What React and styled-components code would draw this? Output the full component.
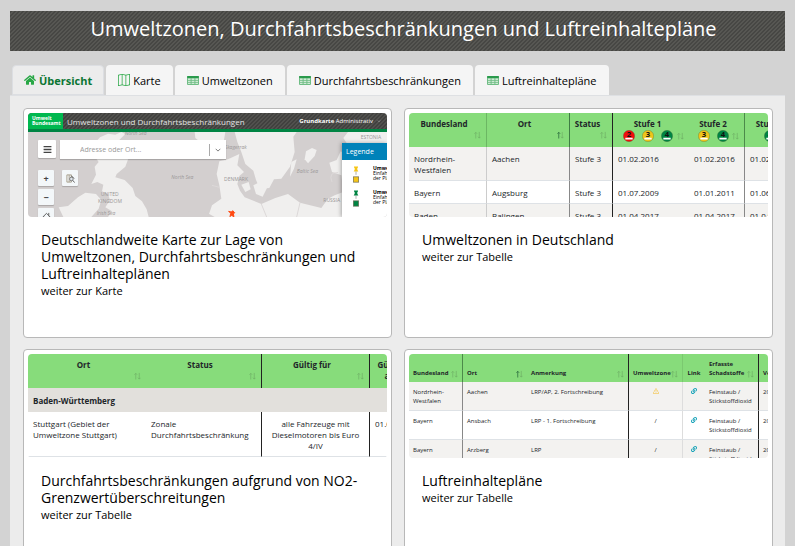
import { useState } from "react";
import styled, { createGlobalStyle } from "styled-components";
import { FaHome, FaBars, FaLink } from "react-icons/fa";
import { BsExclamationTriangle, BsMap, BsChevronDown } from "react-icons/bs";

const tabs = [
  { id: "uebersicht", label: "Übersicht", icon: <FaHome /> },
  { id: "karte", label: "Karte", icon: <BsMap /> },
  { id: "umweltzonen", label: "Umweltzonen", icon: <TableIcon /> },
  { id: "beschraenkungen", label: "Durchfahrtsbeschränkungen", icon: <TableIcon /> },
  { id: "plaene", label: "Luftreinhaltepläne", icon: <TableIcon /> },
];

const zones = [
  ["Nordrhein-Westfalen", "Aachen", "Stufe 3", "01.02.2016", "01.02.2016", "01.02.2016"],
  ["Bayern", "Augsburg", "Stufe 3", "01.07.2009", "01.01.2011", "01.06.2016"],
  ["Baden-Württemberg", "Balingen", "Stufe 3", "01.04.2017", "01.04.2017", "01.04.2017"],
];

const plans = [
  ["Nordrhein-Westfalen", "Aachen", "LRP/AP, 2. Fortschreibung", true],
  ["Bayern", "Ansbach", "LRP - 1. Fortschreibung", false],
  ["Bayern", "Arzberg", "LRP", false],
];

export default function App() {
  const [active, setActive] = useState("uebersicht");

  return (
    <Page>
      <GlobalStyle />
      <Header>
        <PageTitle>Umweltzonen, Durchfahrtsbeschränkungen und Luftreinhaltepläne</PageTitle>
      </Header>
      <TabList role="tablist">
        {tabs.map((tab) => (
          <Tab
            key={tab.id}
            role="tab"
            aria-selected={active === tab.id}
            $active={active === tab.id}
            onClick={() => setActive(tab.id)}
          >
            {tab.icon}
            {tab.label}
          </Tab>
        ))}
      </TabList>
      <Panel role="tabpanel">
        <Card>
          <MapPreview />
          <CardTitle>
            Deutschlandweite Karte zur Lage von Umweltzonen, Durchfahrtsbeschränkungen und Luftreinhalteplänen
          </CardTitle>
          <CardLink href="#karte">weiter zur Karte</CardLink>
        </Card>
        <Card>
          <ZonesPreview />
          <CardTitle>Umweltzonen in Deutschland</CardTitle>
          <CardLink href="#umweltzonen">weiter zur Tabelle</CardLink>
        </Card>
        <Card>
          <RestrictionsPreview />
          <CardTitle>Durchfahrtsbeschränkungen aufgrund von NO2-Grenzwertüberschreitungen</CardTitle>
          <CardLink href="#beschraenkungen">weiter zur Tabelle</CardLink>
        </Card>
        <Card>
          <PlansPreview />
          <CardTitle>Luftreinhaltepläne</CardTitle>
          <CardLink href="#plaene">weiter zur Tabelle</CardLink>
        </Card>
      </Panel>
    </Page>
  );
}

function TableIcon() {
  return (
    <svg viewBox="0 0 12 12" aria-hidden="true">
      <rect x="0" y="2" width="12" height="9" rx="1" fill="#6fbd85" />
      <rect x="0" y="2" width="12" height="2" rx="1" fill="#2a9a4c" />
      <path
        d="M1 4.5h2.6v1.4H1zM4.6 4.5h2.8v1.4H4.6zM8.4 4.5H11v1.4H8.4zM1 6.7h2.6v1.3H1zM4.6 6.7h2.8v1.3H4.6zM8.4 6.7H11v1.3H8.4zM1 8.8h2.6v1.3H1zM4.6 8.8h2.8v1.3H4.6zM8.4 8.8H11v1.3H8.4z"
        fill="#cfe9d5"
      />
    </svg>
  );
}

function Sort({ up }) {
  return (
    <SortIcon viewBox="0 0 8 8" aria-hidden="true">
      <path d="M2 8V1M0.5 2.5L2 1L3.5 2.5" stroke={up ? "#1d5c33" : "#70b066"} />
      <path d="M6 0.5V7.5M4.5 6L6 7.5L7.5 6" stroke="#70b066" />
    </SortIcon>
  );
}

function Badge({ level }) {
  const colors = { 2: "#f20d0d", 3: "#f0c419", 4: "#008443" };
  return (
    <BadgeIcon viewBox="0 0 36 36">
      <circle cx="18" cy="18" r="17" fill={colors[level]} stroke="#4d6b3a" strokeWidth="1" />
      <text x="18" y="20" textAnchor="middle" fontSize="23" fontFamily="Open Sans, sans-serif" fill="#111">
        {level}
      </text>
      <path d="M7 26H29" stroke="#fff" strokeWidth="5" />
    </BadgeIcon>
  );
}

function LevelBadges({ levels }) {
  return (
    <Badges>
      <BadgeGroup>
        {levels.map((level) => (
          <Badge key={level} level={level} />
        ))}
      </BadgeGroup>
      <Sort />
    </Badges>
  );
}

function MapPreview() {
  return (
    <Preview>
      <MapHeader>
        <MapLogo>
          Umwelt
          <br />
          Bundesamt
        </MapLogo>
        <MapTitle>Umweltzonen und Durchfahrtsbeschränkungen</MapTitle>
        <MapBase>
          <b>Grundkarte</b> Administrativ
        </MapBase>
        <BsChevronDown />
      </MapHeader>
      <MapArea>
        <MapDrawing viewBox="0 0 1080 255" preserveAspectRatio="xMinYMin slice" aria-hidden="true">
          <rect width="1080" height="255" fill="#d3cfcf" />
          <g fill="#f0efee">
            <path d="M216 16L240 5L262 8L280 0L292 6L270 28L250 40L256 48L300 52L303 74L292 104L266 126L262 136L290 144L314 168L322 192L342 208L356 232L362 255H240L252 238L232 226L246 204L240 186L222 178L226 158L208 150L190 156L204 128L200 104L212 90L198 70L212 50L200 34Z" />
            <path d="M92 226L120 222L150 196L172 182L204 186L220 204L212 230L190 255H106Z" />
            <path d="M500 0H592L588 24L560 34L536 26L520 32L502 18Z" />
            <path d="M620 0H806L796 14L800 60L786 104L760 140L738 142L724 168L696 170L684 144L676 116L652 96L640 60L628 30Z" />
            <path d="M574 88L600 82L634 66L628 100L648 120L634 132L628 156L636 176L650 196L700 216L742 198L780 186L816 212L880 228L900 200L920 190L950 206L1080 206V255H540L552 220L580 200L574 160L566 126Z" />
            <path d="M640 158L662 150L668 172L652 180Z" />
            <path d="M676 160L700 148L718 166L704 194L684 186Z" />
            <path d="M834 58L852 48L866 54L860 72L840 94L830 82Z" />
            <path d="M790 90L806 82L798 110L786 134Z" />
            <path d="M1080 0H960L946 18L966 48L952 66L938 58L926 84L904 92L912 120L940 130L946 180L920 190L940 214L1080 220Z" />
          </g>
          <g fill="none" stroke="#dcd8d8" strokeWidth="3">
            <path d="M552 160L574 166M700 216L716 255M816 212L806 255M912 150Q900 120 930 122" />
          </g>
          <path d="M390 255L404 240L470 236L540 244L560 255Z" fill="#d3cfcf" />
          <g fill="#9a9797" fontFamily="Open Sans, sans-serif" fontSize="15">
            <text x="218" y="192">UNITED</text>
            <text x="210" y="212">KINGDOM</text>
            <text x="206" y="248" fontStyle="italic">Irish Sea</text>
            <text x="290" y="10" fontStyle="italic">North Sea</text>
            <text x="430" y="141" fontStyle="italic">North Sea</text>
            <text x="590" y="52" fontStyle="italic">Skagerrak</text>
            <text x="588" y="147">DENMARK</text>
            <text x="806" y="124" fontStyle="italic">Baltic Sea</text>
            <text x="998" y="22">ESTONIA</text>
            <text x="886" y="211">RUSSIA</text>
          </g>
          <path d="M602 238L610 240L614 236L620 242L616 246L618 254L610 250L606 254L608 244Z" fill="#ff4a12" stroke="#ff4a12" strokeWidth="3" />
        </MapDrawing>
        <MapControls>
          <MapRow>
            <MapButton $wide aria-label="Menü">
              <FaBars />
            </MapButton>
            <SearchBox>
              <SearchInput aria-label="Adresse oder Ort" placeholder="Adresse oder Ort..." />
              <SearchToggle aria-label="Vorschläge">
                <BsChevronDown />
              </SearchToggle>
            </SearchBox>
          </MapRow>
          <MapTools>
            <MapZoom>
              <MapButton aria-label="Vergrößern">+</MapButton>
              <MapButton aria-label="Verkleinern">−</MapButton>
              <MapButton aria-label="Startansicht">
                <svg viewBox="0 0 10 10" fill="none" stroke="#555">
                  <path d="M0.5 6L5 1.5L9.5 6M2 5V10M8 5V10M7.5 1V4" />
                </svg>
              </MapButton>
            </MapZoom>
            <MapButton aria-label="Legende">
              <svg viewBox="0 0 10 10" fill="none" stroke="#777">
                <path d="M1 1H3.5V9H1ZM3.5 1H6V9H3.5" stroke="#a39a86" />
                <circle cx="6" cy="5.5" r="2" fill="#dfe7ee" />
                <path d="M7.5 7L9.5 9.5M6 2L9 5" stroke="#555" />
              </svg>
            </MapButton>
          </MapTools>
        </MapControls>
        <Legend>
          <LegendTitle>Legende</LegendTitle>
          <LegendItem color="#f5c518" />
          <LegendItem color="#008443" />
        </Legend>
      </MapArea>
    </Preview>
  );
}

function LegendItem({ color }) {
  return (
    <LegendRow>
      <svg viewBox="0 0 18 50" aria-hidden="true">
        <path d="M3 1H15V5H13V11L16 16H2L5 11V5H3Z" fill={color} />
        <path d="M9 16V26" stroke="#888" strokeWidth="2" />
        <rect x="1" y="32" width="16" height="16" fill={color} stroke="#6d6a55" strokeWidth="2" />
      </svg>
      <LegendText>
        <b>Umweltzone</b>
        <br />
        Einfahren
        <br />
        der Plakette
      </LegendText>
    </LegendRow>
  );
}

function ZonesPreview() {
  return (
    <Preview>
      <Table>
        <colgroup>
          {[78, 83, 43, 76, 56, 56].map((width, i) => (
            <Col key={i} $width={width} />
          ))}
        </colgroup>
        <thead>
          <tr>
            <HeadCell $line="#6cb763"><Stack><HeadText>Bundesland</HeadText><Sort /></Stack></HeadCell>
            <HeadCell $line="#3f7d44"><Stack><HeadText>Ort</HeadText><Sort up /></Stack></HeadCell>
            <HeadCell $line="#222"><Stack><HeadText>Status</HeadText><Sort /></Stack></HeadCell>
            <HeadCell><Stack $tight><HeadText>Stufe 1</HeadText><LevelBadges levels={[2, 3, 4]} /></Stack></HeadCell>
            <HeadCell $line="#4c8a4a"><Stack $tight><HeadText>Stufe 2</HeadText><LevelBadges levels={[3, 4]} /></Stack></HeadCell>
            <HeadCell><Stack $tight><HeadText>Stufe 3</HeadText><LevelBadges levels={[4]} /></Stack></HeadCell>
          </tr>
        </thead>
        <tbody>
          {zones.map((zone, row) => (
            <BodyRow key={zone[1]} $shaded={row % 2 === 0}>
              {zone.map((value, i) => (
                <Cell key={i} $line={["#ccc", "#888", "#222", null, "#888"][i]}>{value}</Cell>
              ))}
            </BodyRow>
          ))}
        </tbody>
      </Table>
    </Preview>
  );
}

function RestrictionsPreview() {
  return (
    <Preview>
      <Table>
        <colgroup>
          {[118, 116, 108, 38].map((width, i) => (
            <Col key={i} $width={width} />
          ))}
        </colgroup>
        <thead>
          <tr>
            <HeadCell><Stack><HeadText>Ort</HeadText><Sort /></Stack></HeadCell>
            <HeadCell $line="#222"><Stack><HeadText>Status</HeadText><Sort /></Stack></HeadCell>
            <HeadCell $line="#222"><Stack><HeadText>Gültig für</HeadText><Sort /></Stack></HeadCell>
            <HeadCell>Gültig<br />ab</HeadCell>
          </tr>
        </thead>
        <tbody>
          <tr>
            <GroupCell colSpan={4}>Baden-Württemberg</GroupCell>
          </tr>
          <BodyRow>
            <Cell>Stuttgart (Gebiet der Umweltzone Stuttgart)</Cell>
            <Cell $line="#222">Zonale Durchfahrtsbeschränkung</Cell>
            <Cell $line="#222" $center>alle Fahrzeuge mit Dieselmotoren bis Euro 4/IV</Cell>
            <Cell>01.01.2019</Cell>
          </BodyRow>
        </tbody>
      </Table>
    </Preview>
  );
}

function PlansPreview() {
  return (
    <Preview>
      <Table $small>
        <colgroup>
          {[54, 64, 102, 54, 22, 54, 50].map((width, i) => (
            <Col key={i} $width={width} />
          ))}
        </colgroup>
        <thead>
          <tr>
            <HeadCell $line="#4c8a4a"><Line>Bundesland<Sort /></Line></HeadCell>
            <HeadCell><Line>Ort<Sort up /></Line></HeadCell>
            <HeadCell $line="#222"><Line>Anmerkung<Sort /></Line></HeadCell>
            <HeadCell $line="#7bc970"><Line>Umweltzone<Sort /></Line></HeadCell>
            <HeadCell>Link</HeadCell>
            <HeadCell $line="#222"><Line><span>Erfasste<br />Schadstoffe</span><Sort /></Line></HeadCell>
            <HeadCell><Line>Verursacher</Line></HeadCell>
          </tr>
        </thead>
        <tbody>
          {plans.map(([state, city, note, warning], row) => (
            <BodyRow key={city} $shaded={row % 2 === 0}>
              <Cell $line="#888">{state}</Cell>
              <Cell>{city}</Cell>
              <Cell $line="#222">{note}</Cell>
              <Cell $line="#ddd" $center>{warning ? <BsExclamationTriangle color="#f5b921" /> : "/"}</Cell>
              <Cell $center><FaLink color="#17a2b8" /></Cell>
              <Cell $line="#222">Feinstaub / Stickstoffdioxid</Cell>
              <Cell>2015</Cell>
            </BodyRow>
          ))}
        </tbody>
      </Table>
    </Preview>
  );
}

const GlobalStyle = createGlobalStyle`
  * {
    box-sizing: border-box;
  }
  html {
    scrollbar-width: none;
  }
  body {
    margin: 0;
    background-color: #d3d3d3;
    color: #000;
    font-family: "Open Sans", "Noto Sans", sans-serif;
    font-size: 12px;
  }
  button, input {
    font-family: inherit;
    margin: 0;
    border: none;
  }
`;

const Page = styled.main`
  padding: 11px 10px 0;
`;

const Header = styled.header`
  height: 40px;
  display: flex;
  justify-content: center;
  align-items: center;
  padding: 0 0 4px 12px;
  background: linear-gradient(135deg, #474744 25%, #575753 25% 50%, #474744 50% 75%, #575753 75%) 0 0 / 4px 4px;
`;

const PageTitle = styled.h1`
  margin: 0;
  color: #fff;
  font-size: 20px;
  font-weight: 400;
  line-height: 28px;
  white-space: nowrap;
`;

const TabList = styled.div`
  display: flex;
  gap: 2px;
  padding: 14px 2px 0;
`;

const Tab = styled.button`
  height: 30px;
  display: flex;
  align-items: center;
  gap: 3px;
  padding: 0 ${(props) => (props.$active ? "11px" : "12px")};
  border: ${(props) => (props.$active ? "1px solid #dcdee2" : "none")};
  border-radius: 4px 4px 0 0;
  background-color: ${(props) => (props.$active ? "#ececec" : "#f5f5f5")};
  color: ${(props) => (props.$active ? "#0b7532" : "#000")};
  font-size: 11px;
  font-weight: ${(props) => (props.$active ? 700 : 400)};
  white-space: nowrap;
  cursor: pointer;
  svg {
    width: 12px;
    height: 12px;
    flex: none;
    color: #28a745;
  }
`;

const Panel = styled.section`
  display: grid;
  grid-template-columns: 1fr 1fr;
  gap: 11px 12px;
  padding: 12px 12px 12px 13px;
  border-top: 1px solid #dee0e3;
  background-color: #ececec;
`;

const Card = styled.article`
  min-height: 230px;
  min-width: 0;
  padding: 4px;
  border: 1px solid #b8b8b8;
  border-radius: 4px;
  background-color: #fff;
`;

const CardTitle = styled.h2`
  margin: 14px 13px 0;
  font-size: 14px;
  font-weight: 400;
  line-height: 17px;
`;

const CardLink = styled.a`
  display: block;
  margin: 0 13px;
  color: #000;
  font-size: 11px;
  line-height: 17px;
  text-decoration: none;
`;

const Preview = styled.div`
  height: 104px;
  overflow: hidden;
  border-radius: 4px;
`;

const Table = styled.table`
  table-layout: fixed;
  width: 100%;
  min-width: max-content;
  border-collapse: separate;
  border-spacing: 0;
  color: #212529;
  font-size: ${(props) => (props.$small ? "6px" : "8px")};
  line-height: ${(props) => (props.$small ? "9px" : "11px")};
  th {
    height: ${(props) => (props.$small ? "28px" : "34px")};
    padding: ${(props) => (props.$small ? "6px 4px 4px 4px" : "5px 5px 5px 6px")};
    vertical-align: ${(props) => (props.$small ? "bottom" : "top")};
  }
  td {
    padding: ${(props) => (props.$small ? "6px 4px 4px 4px" : "6px 5px 5px 5px")};
  }
`;

const Col = styled.col`
  width: ${(props) => props.$width}px;
`;

const HeadCell = styled.th`
  background-color: #87dc7b;
  border-right: ${(props) => (props.$line ? `1px solid ${props.$line}` : "none")};
  font-weight: 700;
`;

const Stack = styled.div`
  display: flex;
  flex-direction: column;
  align-items: center;
  gap: ${(props) => (props.$tight ? "1px" : "2px")};
  > svg {
    align-self: flex-end;
  }
`;

const HeadText = styled.span`
  padding-right: 8px;
  white-space: nowrap;
`;

const Line = styled.div`
  display: flex;
  align-items: flex-end;
  justify-content: space-between;
  text-align: left;
`;

const Badges = styled.div`
  width: 100%;
  display: flex;
  align-items: center;
`;

const BadgeGroup = styled.div`
  flex: 1;
  display: flex;
  justify-content: center;
  gap: 7px;
`;

const BadgeIcon = styled.svg`
  width: 12px;
  height: 12px;
  flex: none;
`;

const SortIcon = styled.svg`
  width: 7px;
  height: 8px;
  flex: none;
  fill: none;
  stroke-width: 0.8;
`;

const BodyRow = styled.tr`
  background-color: ${(props) => (props.$shaded ? "#f3f2f0" : "#fff")};
`;

const Cell = styled.td`
  border-right: ${(props) => (props.$line ? `1px solid ${props.$line}` : "none")};
  border-bottom: 1px solid #dee2e6;
  text-align: ${(props) => (props.$center ? "center" : "left")};
  vertical-align: top;
  svg {
    width: 6px;
    height: 6px;
  }
`;

const GroupCell = styled.td`
  height: 24px;
  background-color: #e2e0dc;
  font-weight: 700;
`;

const MapHeader = styled.div`
  height: 19px;
  display: flex;
  align-items: center;
  padding-right: 6px;
  border-bottom: 3px solid #008443;
  background: linear-gradient(135deg, #41413f 25%, #51514e 25% 50%, #41413f 50% 75%, #51514e 75%) 0 0 / 4px 4px;
  color: #fff;
  > svg {
    width: 4px;
    height: 4px;
    margin-left: 4px;
  }
`;

const MapLogo = styled.div`
  width: 35px;
  height: 16px;
  padding: 3px 4px;
  background-color: #00b84f;
  font-size: 5px;
  font-weight: 700;
  line-height: 5px;
`;

const MapTitle = styled.div`
  flex: 1;
  padding-left: 4px;
  color: #e4e4e4;
  font-size: 8px;
  white-space: nowrap;
`;

const MapBase = styled.div`
  font-size: 6px;
  white-space: nowrap;
`;

const MapArea = styled.div`
  position: relative;
  height: 85px;
`;

const MapDrawing = styled.svg`
  display: block;
  width: 100%;
  height: 100%;
`;

const MapControls = styled.div`
  position: absolute;
  inset: 8px auto auto 10px;
`;

const MapRow = styled.div`
  display: flex;
  gap: 4px;
`;

const MapTools = styled.div`
  display: flex;
  gap: 8px;
  padding-top: 11px;
`;

const MapZoom = styled.div`
  display: flex;
  flex-direction: column;
  gap: 3px;
`;

const MapButton = styled.button`
  width: ${(props) => (props.$wide ? "18px" : "16px")};
  height: ${(props) => (props.$wide ? "18px" : "16px")};
  display: flex;
  align-items: center;
  justify-content: center;
  padding: 0;
  border-radius: 1px;
  background-color: ${(props) => (props.$wide ? "#fff" : "#f3f7f9")};
  box-shadow: 0 1px 1px rgba(0, 0, 0, 0.2);
  color: #444;
  font-size: 9px;
  font-weight: 700;
  line-height: 1;
  svg {
    width: 9px;
    height: 9px;
  }
`;

const SearchBox = styled.div`
  width: 166px;
  height: 19px;
  display: flex;
  align-items: center;
  background-color: #fff;
  box-shadow: 0 1px 1px rgba(0, 0, 0, 0.2);
`;

const SearchInput = styled.input`
  flex: 1;
  min-width: 0;
  padding: 0 0 0 20px;
  background: none;
  font-size: 7px;
  &::placeholder {
    color: #999;
  }
`;

const SearchToggle = styled.button`
  width: 17px;
  height: 12px;
  display: flex;
  align-items: center;
  justify-content: center;
  padding: 0;
  border-left: 1px solid #aaa;
  background: none;
  color: #222;
  svg {
    width: 6px;
    height: 6px;
    stroke: currentColor;
  }
`;

const Legend = styled.aside`
  position: absolute;
  inset: 11px 0 0 auto;
  width: 45px;
  overflow: hidden;
  background-color: #fff;
  box-shadow: -1px 0 4px rgba(0, 0, 0, 0.3);
`;

const LegendTitle = styled.div`
  height: 17px;
  padding-left: 4px;
  background-color: #0082b9;
  color: #fff;
  font-size: 7px;
  line-height: 17px;
`;

const LegendRow = styled.div`
  display: flex;
  gap: 14px;
  height: 24px;
  padding: 6px 0 0 11px;
  svg {
    width: 6px;
    height: 17px;
    flex: none;
  }
`;

const LegendText = styled.div`
  font-size: 5px;
  line-height: 5px;
  white-space: nowrap;
`;
